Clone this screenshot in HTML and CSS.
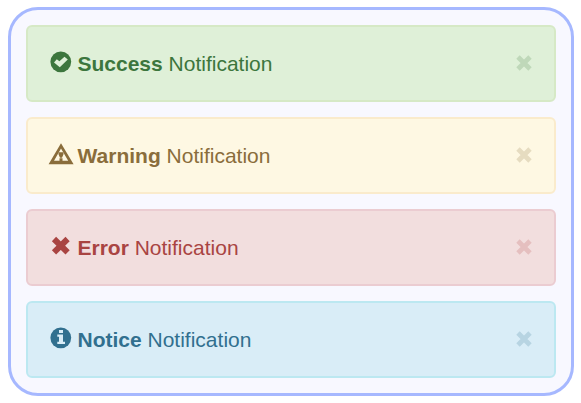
FILE: index.html
```
<!DOCTYPE html>
<html lang="en">
<head>
<meta charset="utf-8">
<title>Notifications</title>
<link rel="stylesheet" href="styles.css">
</head>
<body>
<main class="panel">
  <div class="alert success">
    <svg class="icon" viewBox="0 0 24 22"><circle cx="11.8" cy="10.8" r="10.4"/><path class="cut" d="M5 11.4 7.8 8.2 10.4 10.2 15.5 5.8 18.8 8.6 10.8 16.2Z"/></svg>
    <span class="message"><strong>Success</strong> Notification</span>
    <button class="close" aria-label="Close"><svg viewBox="0 0 16 16"><path d="M2 2 14 14M14 2 2 14"/></svg></button>
  </div>
  <div class="alert warning">
    <svg class="icon" viewBox="0 0 24 22"><path fill-rule="evenodd" d="M12 .2 24.6 21.2H-.4ZM12 5.6 5 17.8H19.2Z"/><path d="M9.5 9.2H14.5V11.2L13 14.7H11L9.5 11.2ZM10.5 15.3H13.5V18H10.5Z"/></svg>
    <span class="message"><strong>Warning</strong> Notification</span>
    <button class="close" aria-label="Close"><svg viewBox="0 0 16 16"><path d="M2 2 14 14M14 2 2 14"/></svg></button>
  </div>
  <div class="alert error">
    <svg class="icon" viewBox="0 0 24 22"><path class="cross" d="M5 4 18.6 17.4M18.6 4 5 17.4"/></svg>
    <span class="message"><strong>Error</strong> Notification</span>
    <button class="close" aria-label="Close"><svg viewBox="0 0 16 16"><path d="M2 2 14 14M14 2 2 14"/></svg></button>
  </div>
  <div class="alert notice">
    <svg class="icon" viewBox="0 0 24 22"><circle cx="11.8" cy="10.8" r="10.4"/><path class="cut" d="M10 3H14V6H10ZM8.3 7.6H14V14.7H16V17H8.3V14.7H10V9.8H8.3Z"/></svg>
    <span class="message"><strong>Notice</strong> Notification</span>
    <button class="close" aria-label="Close"><svg viewBox="0 0 16 16"><path d="M2 2 14 14M14 2 2 14"/></svg></button>
  </div>
</main>
</body>
</html>
```
FILE: styles.css
```
* {
  box-sizing: border-box;
}

body {
  margin: 0;
  padding: 7px 7px 7px 8px;
  background: #fff;
  font-family: "Liberation Sans", Arial, sans-serif;
  font-size: 21px;
}

.panel {
  display: flex;
  flex-direction: column;
  gap: 15px;
  width: 566px;
  height: 389px;
  padding: 15px;
  border: 3px solid #a6b8ff;
  border-radius: 30px;
  background: #f8f8ff;
}

.alert {
  display: flex;
  align-items: center;
  width: 530px;
  height: 77px;
  padding: 0 22px 0 21px;
  border: 2px solid;
  border-radius: 6px;
}

.success {
  --fill: #dff0d8;
  --close: #bfd8b9;
  color: #3c763d;
  background: var(--fill);
  border-color: #d6e9c6;
}

.warning {
  --close: #e6dcc0;
  color: #8a6d3b;
  background: #fef8e3;
  border-color: #faebcc;
}

.error {
  --close: #e5bfbf;
  color: #a94442;
  background: #f2dede;
  border-color: #ebccd1;
}

.notice {
  --fill: #d9edf7;
  --close: #b7d4e2;
  color: #31708f;
  background: var(--fill);
  border-color: #bce8f1;
}

.icon {
  width: 24px;
  height: 22px;
  margin: 0 4.5px 4px 0;
  fill: currentColor;
  overflow: visible;
}

.icon .cut {
  fill: var(--fill);
}

.icon .cross {
  fill: none;
  stroke: currentColor;
  stroke-width: 6;
}

.message {
  flex: 1;
  line-height: 30px;
}

.close {
  display: flex;
  margin-bottom: 1px;
  padding: 0;
  border: 0;
  background: none;
  color: var(--close);
}

.close svg {
  width: 16px;
  height: 16px;
  fill: none;
  stroke: currentColor;
  stroke-width: 4.8;
}
```
